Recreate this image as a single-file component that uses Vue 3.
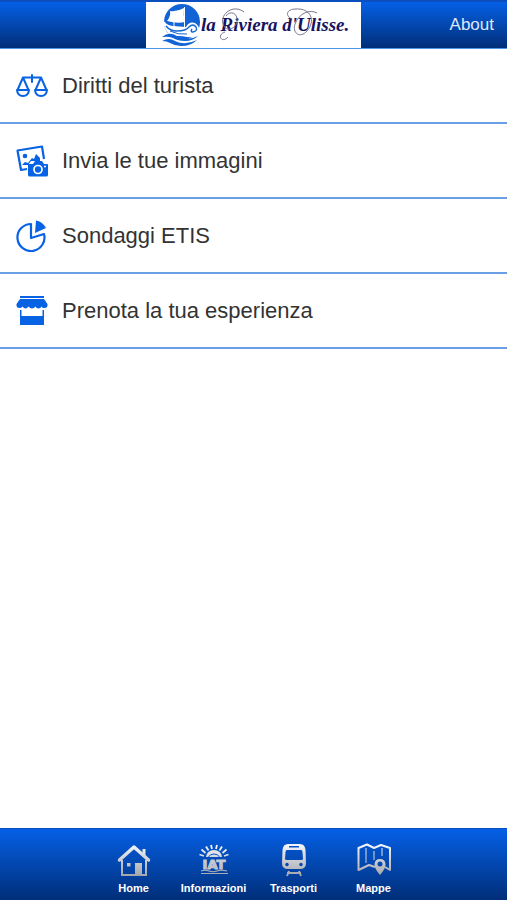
<template>
  <div class="app">
    <header class="topbar">
      <div class="brand">
        <svg class="brand-mark" viewBox="0 0 40 44" aria-hidden="true">
          <circle cx="21" cy="19" r="18" fill="#1264d6" />
          <path d="M9 8Q16 9 23 5Q22 12 24 19Q16 21 6 18Q10 13 9 8Z" fill="#fff" />
          <path d="M23.500 4V24M13 19V24" fill="none" stroke="#fff" stroke-width="1" />
          <path d="M1 15Q4 22 12 23L25 24Q28 18 34 20Q39 23 38 29Q36 35 26 34Q17 32 11 34Q4 30 1 15Z" fill="#fff" />
          <path d="M5 23Q9 28 16 28Q25 28 28 24Q32 20 35 24Q37 28 32 29Q29 29 31 26" fill="none" stroke="#1264d6" stroke-width="1.400" />
          <path d="M9 28Q17 32 26 31" fill="none" stroke="#1264d6" stroke-width="1" />
          <path d="M1 34Q8 28 16 33Q25 39 37 33Q32 38 24 38Q17 38 12 35Q7 33 1 34Z" fill="#1264d6" />
          <path d="M1 38Q8 34 14 38Q24 43 36 37Q30 43 20 43Q14 43 9 40Q6 38 1 38Z" fill="#1264d6" />
        </svg>
        <div class="brand-name">
          <svg class="swirls" viewBox="0 0 150 46" aria-hidden="true">
            <path d="M43 11C33 3 19 12 22 23C25 32 35 28 36 20C37 12 29 9 25 15M27 36C21 43 15 34 24 31" />
            <path d="M91 18C84 15 85 8 95 8C110 7 115 20 106 30C99 38 91 32 94 23C98 12 109 8 116 12" />
          </svg>
          <span>la Riviera d'Ulisse.</span>
        </div>
      </div>
      <a href="#about" class="about">About</a>
    </header>

    <main class="content">
      <ul class="menu">
        <li v-for="item in items" :key="item.icon">
          <a :href="'#' + item.icon" class="menu-item">
            <svg class="menu-icon" viewBox="0 0 32 32" aria-hidden="true">
              <g v-if="item.icon === 'diritti'" fill="none" stroke="currentColor" stroke-width="2" stroke-linejoin="round">
                <path d="M7 7.500H25M16 5V12" stroke-linecap="round" />
                <path d="M7 7.500L1.500 20M7 7.500L12.500 20M25 7.500L19.500 20M25 7.500L30.500 20" />
                <path d="M1 20H13Q12.500 26 7 26T1 20ZM19 20H31Q30.500 26 25 26T19 20Z" />
              </g>
              <g v-else-if="item.icon === 'immagini'">
                <path d="M11 24L5 25L1.500 5.500L26 1.500L28 14" fill="none" stroke="currentColor" stroke-width="2.200" stroke-linejoin="round" />
                <circle cx="9" cy="11" r="2.300" fill="currentColor" />
                <path d="M6 20L9 17L12 18L16 13L18 14L20 9L24 13V16H15L12 20Z" fill="currentColor" />
                <path d="M12 19H17L19 16H26L28 19H31Q32 19 32 20V30Q32 31.500 30.500 31.500H14Q12 31.500 12 30Z" fill="currentColor" />
                <circle cx="22" cy="24.500" r="4" fill="none" stroke="#fff" stroke-width="1.700" />
                <circle cx="29" cy="21.500" r="1" fill="#fff" />
              </g>
              <g v-else-if="item.icon === 'sondaggi'">
                <path d="M15 4A13.500 13.500 0 1 0 28 14L15 18Z" fill="none" stroke="currentColor" stroke-width="2.200" stroke-linejoin="round" />
                <path d="M20 .500Q26 1 30 8L19 13Z" fill="currentColor" />
              </g>
              <g v-else fill="currentColor">
                <path d="M4 1H28V3H4ZM4 4H28L31.500 9Q32 13 28.500 13Q26 13 25.500 11.500Q24.500 13.500 22.500 13.500T19.500 11.500Q18 13.500 16 13.500T12.500 11.500Q11 13.500 9.500 13.500T6.500 11.500Q5.500 13 3.500 13Q0 13 .500 9Z" />
                <path d="M4 15H5.500V21H26.500V15H28V30H4Z" />
              </g>
            </svg>
            <span>{{ item.label }}</span>
          </a>
        </li>
      </ul>
    </main>

    <nav class="tabbar">
      <a v-for="tab in tabs" :key="tab.icon" :href="'#' + tab.icon" class="tab">
        <svg class="tab-icon" viewBox="0 0 34 34" aria-hidden="true">
          <defs>
            <linearGradient :id="'silver-' + tab.icon" gradientUnits="userSpaceOnUse" x1="0" y1="2" x2="0" y2="33">
              <stop offset="0" stop-color="#f4f6fb" />
              <stop offset="1" stop-color="#a3a5ab" />
            </linearGradient>
          </defs>
          <g v-if="tab.icon === 'home'" fill="none" stroke="url(#silver-home)">
            <path d="M2.500 17L17 4L31.500 17" stroke-width="3.500" stroke-linejoin="round" stroke-linecap="round" />
            <path d="M5 17V32H29V17" stroke-width="2" />
            <path d="M27 12V6" stroke-width="3" />
            <path d="M18 20H25V32H18ZM10 20H13.500V23.500H10Z" fill="url(#silver-home)" stroke="none" />
          </g>
          <g v-else-if="tab.icon === 'informazioni'">
            <path d="M9 14A8 7 0 0 1 25 14Z" fill="url(#silver-informazioni)" />
            <path d="M11.500 14A6 5 0 0 1 22.500 14" fill="none" stroke="#0554c6" stroke-width="1" />
            <path d="M7 13L2.500 11.500M8.500 10L4.500 6.500M11.500 7.500L9 3.500M15 6L14 2M19 6L20 2M22.500 7.500L25 3.500M25.500 10L29.500 6.500M27 13L31.500 11.500" fill="none" stroke="url(#silver-informazioni)" stroke-width="1.800" />
            <path d="M4 28Q8 26.500 12 28T20 28T30 28M4 30.500H31" fill="none" stroke="url(#silver-informazioni)" stroke-width="1.200" />
            <text x="17" y="26" text-anchor="middle" class="iat" fill="url(#silver-informazioni)">IAT</text>
          </g>
          <g v-else-if="tab.icon === 'trasporti'">
            <path d="M11 1H23Q28 1 28.500 7L29 20Q29 26 23 26H11Q5 26 5 20L5.500 7Q6 1 11 1ZM12 3V4.500H22V3ZM10 7Q8.500 7 8.500 9L8 16Q8 17 10 17H24Q26 17 26 16L25.500 9Q25.500 7 24 7Z" fill="url(#silver-trasporti)" fill-rule="evenodd" />
            <circle cx="10" cy="21.500" r="1.700" fill="#0746ae" />
            <circle cx="24" cy="21.500" r="1.700" fill="#0746ae" />
            <path d="M12 28L10 33M22 28L24 33M10 30H24" fill="none" stroke="url(#silver-trasporti)" stroke-width="2" />
          </g>
          <g v-else>
            <path d="M18 24L12 22L1.500 27V5L10 1.500L17 5L24 2L33 5V27L28 24" fill="none" stroke="url(#silver-mappe)" stroke-width="2" stroke-linejoin="round" />
            <path d="M9 5V20M17 8V17M25 5V13" fill="none" stroke="url(#silver-mappe)" stroke-width="1" />
            <path d="M23 32Q17 25 17.500 21Q18 16 23 16T28.500 21Q29 25 23 32ZM23 18.500A2.500 2.500 0 1 0 23 23.500A2.500 2.500 0 1 0 23 18.500Z" fill="url(#silver-mappe)" fill-rule="evenodd" />
          </g>
        </svg>
        <span>{{ tab.label }}</span>
      </a>
    </nav>
  </div>
</template>

<script setup>
const items = [
  { icon: 'diritti', label: 'Diritti del turista' },
  { icon: 'immagini', label: 'Invia le tue immagini' },
  { icon: 'sondaggi', label: 'Sondaggi ETIS' },
  { icon: 'prenota', label: 'Prenota la tua esperienza' }
]

const tabs = [
  { icon: 'home', label: 'Home' },
  { icon: 'informazioni', label: 'Informazioni' },
  { icon: 'trasporti', label: 'Trasporti' },
  { icon: 'mappe', label: 'Mappe' }
]
</script>

<style>
body {
  margin: 0;
  background: #fff;
}
</style>

<style scoped>
.app {
  display: flex;
  flex-direction: column;
  min-height: 100vh;
  font-family: "Liberation Sans", Arial, sans-serif;
}

a {
  text-decoration: none;
}

.topbar {
  display: grid;
  grid-template-columns: 1fr auto 1fr;
  align-items: center;
  box-sizing: border-box;
  height: 49px;
  border-top: 2px solid #0a4fbd;
  border-bottom: 1px solid #4a94ea;
  background: linear-gradient(#0560e6, #002e78);
}

.brand {
  grid-column: 2;
  display: flex;
  align-items: center;
  box-sizing: border-box;
  width: 215px;
  height: 46px;
  padding-left: 15px;
  background: #fff;
}

.brand-mark {
  flex: none;
  width: 40px;
  height: 44px;
}

.brand-name {
  position: relative;
  color: #17135f;
  font: italic bold 19px "Liberation Serif", "Times New Roman", serif;
  white-space: nowrap;
}

.swirls {
  position: absolute;
  top: -13px;
  left: 0;
  width: 150px;
  height: 46px;
  fill: none;
  stroke: #77758f;
  stroke-width: 1;
}

.about {
  justify-self: end;
  padding-right: 13px;
  color: #dce8fb;
  font-size: 17px;
}

.content {
  flex: 1;
}

.menu {
  margin: 0;
  padding: 0;
  list-style: none;
}

.menu-item {
  display: flex;
  align-items: center;
  gap: 14px;
  box-sizing: border-box;
  height: 75px;
  padding: 0 16px;
  border-bottom: 2px solid #6a9fe6;
  color: #333;
  font-size: 22px;
}

.menu-icon {
  flex: none;
  width: 32px;
  height: 32px;
  color: #0863e4;
}

.tabbar {
  display: flex;
  justify-content: center;
  box-sizing: border-box;
  height: 72px;
  border-top: 1px solid #0a4fbd;
  background: linear-gradient(#0560e6, #002e78);
}

.tab {
  display: flex;
  flex-direction: column;
  align-items: center;
  gap: 4px;
  width: 80px;
  padding-top: 14px;
  color: #fff;
  font-size: 11px;
  font-weight: bold;
  line-height: 14px;
}

.tab-icon {
  width: 34px;
  height: 34px;
}

.iat {
  font: bold 13px "DejaVu Sans", sans-serif;
  stroke: #c4c9d4;
  stroke-width: 1;
}
</style>
